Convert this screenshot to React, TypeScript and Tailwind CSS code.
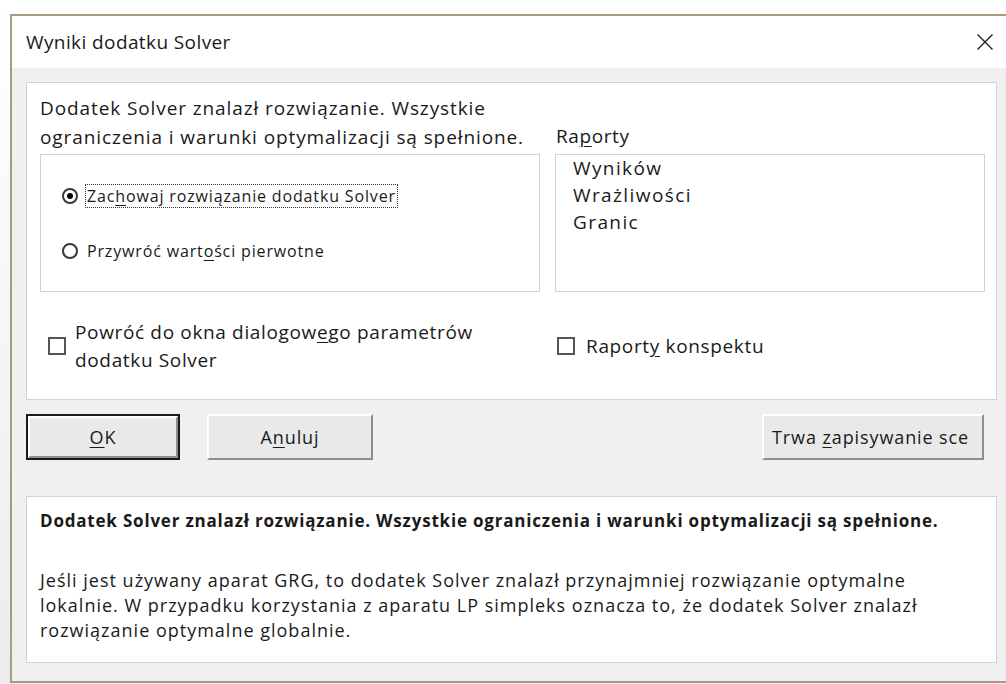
import type { ReactNode } from "react";

// Access-key letter, drawn underlined like a Win32 dialog label
function Key({ children }: { children: ReactNode }) {
  return <span className="underline decoration-1 underline-offset-[3px]">{children}</span>;
}

function Radio({ checked }: { checked?: boolean }) {
  return (
    <span className="flex h-[16px] w-[16px] shrink-0 items-center justify-center rounded-full border-2 border-[#3a3a3a] bg-white">
      {checked && <span className="h-[6px] w-[6px] rounded-full bg-black" />}
    </span>
  );
}

function Checkbox() {
  return <span className="h-[18px] w-[18px] shrink-0 border-2 border-[#555555] bg-white" />;
}

function Button({ children, isDefault, className }: { children: ReactNode; isDefault?: boolean; className?: string }) {
  return (
    <div className={`h-[46px] ${isDefault ? "border-2 border-[#1a1a1a]" : ""} ${className ?? ""}`}>
      <div className="flex h-full items-center justify-center overflow-hidden whitespace-nowrap border-2 border-t-white border-l-white border-r-[#8d8d8d] border-b-[#8d8d8d] bg-[#e9e9e9] text-[18px] tracking-[0.9px] text-[#1a1a1a]">
        {children}
      </div>
    </div>
  );
}

export default function App() {
  return (
    <div className="h-[684px] w-[1006px] overflow-hidden bg-gradient-to-b from-white to-[#ececec] pl-[10px] pt-[14px] font-['Open_Sans','Noto_Sans',sans-serif] text-[#1a1a1a]">
      <div className="flex h-[669px] w-[1010px] flex-col border-y-2 border-l-2 border-[#a89c7d] bg-[#f0f0f0]">
        {/* title bar */}
        <div className="flex h-[52px] items-center justify-between bg-white pl-[14px] pr-[26px]">
          <span className="text-[19px] tracking-[0.4px]">Wyniki dodatku Solver</span>
          <svg width="18" height="18" viewBox="0 0 18 18">
            <path d="M1.5 1.5 L16.5 16.5 M16.5 1.5 L1.5 16.5" stroke="#1f1f1f" strokeWidth="1.4" fill="none" />
          </svg>
        </div>

        <div className="flex flex-col pl-[14px] pt-[14px]">
          {/* results panel */}
          <div className="h-[318px] w-[971px] border border-[#c8d4e3] bg-white pl-[13px] pt-[11px]">
            <div className="grid grid-cols-[500px_430px] gap-x-[15px]">
              <div className="flex flex-col justify-end whitespace-nowrap text-[19px] leading-[29px] tracking-[0.9px]">
                <p>Dodatek Solver znalazł rozwiązanie. Wszystkie</p>
                <p>ograniczenia i warunki optymalizacji są spełnione.</p>
              </div>
              <div className="flex items-end pb-[1px] pl-[1px] text-[19px] leading-[29px] tracking-[0.6px]">
                <span>
                  Ra<Key>p</Key>orty
                </span>
              </div>

              <div className="mt-[2px] flex h-[138px] flex-col border border-[#c8d4e3] pl-[21px] pt-[29px] text-[16px] tracking-[0.85px]">
                <div className="flex items-center gap-[7px]">
                  <Radio checked />
                  <span className="border border-dotted border-[#333333] px-[1px] leading-[22px]">
                    Zac<Key>h</Key>owaj rozwiązanie dodatku Solver
                  </span>
                </div>
                <div className="mt-[32px] flex items-center gap-[9px]">
                  <Radio />
                  <span className="leading-[22px]">
                    Przywróć wart<Key>o</Key>ści pierwotne
                  </span>
                </div>
              </div>
              <div className="mt-[2px] flex h-[138px] flex-col border border-[#c8d4e3] pl-[17px] text-[19px] leading-[27px] tracking-[1.4px]">
                <span>Wyników</span>
                <span>Wrażliwości</span>
                <span>Granic</span>
              </div>

              <div className="mt-[26px] flex items-center gap-[9px] pl-[8px] text-[19px] leading-[28px] tracking-[0.65px]">
                <Checkbox />
                <div className="flex flex-col">
                  <span>
                    Powróć do okna dialogow<Key>e</Key>go parametrów
                  </span>
                  <span>dodatku Solver</span>
                </div>
              </div>
              <div className="mt-[26px] flex items-center gap-[11px] pl-[2px] text-[19px] tracking-[0.65px]">
                <Checkbox />
                <span>
                  Raport<Key>y</Key> konspektu
                </span>
              </div>
            </div>
          </div>

          {/* action buttons */}
          <div className="mt-[14px] flex w-[958px] items-center">
            <Button isDefault className="w-[154px]">
              <Key>O</Key>K
            </Button>
            <Button className="ml-[27px] w-[166px]">
              A<Key>n</Key>uluj
            </Button>
            <Button className="ml-auto w-[222px]">
              <span className="w-full pl-[8px] text-left">
                Trwa <Key>z</Key>apisywanie sce
              </span>
            </Button>
          </div>

          {/* status message */}
          <div className="mt-[36px] h-[167px] w-[971px] border border-[#c8d4e3] bg-white pl-[13px] pt-[13px]">
            <p className="whitespace-nowrap text-[17px] font-bold leading-[22px] tracking-[0.8px]">
              Dodatek Solver znalazł rozwiązanie. Wszystkie ograniczenia i warunki optymalizacji są spełnione.
            </p>
            <p className="mt-[36px] whitespace-nowrap text-[18px] leading-[25px] tracking-[1px]">
              Jeśli jest używany aparat GRG, to dodatek Solver znalazł przynajmniej rozwiązanie optymalne
              <br />
              lokalnie. W przypadku korzystania z aparatu LP simpleks oznacza to, że dodatek Solver znalazł
              <br />
              rozwiązanie optymalne globalnie.
            </p>
          </div>
        </div>
      </div>
    </div>
  );
}
